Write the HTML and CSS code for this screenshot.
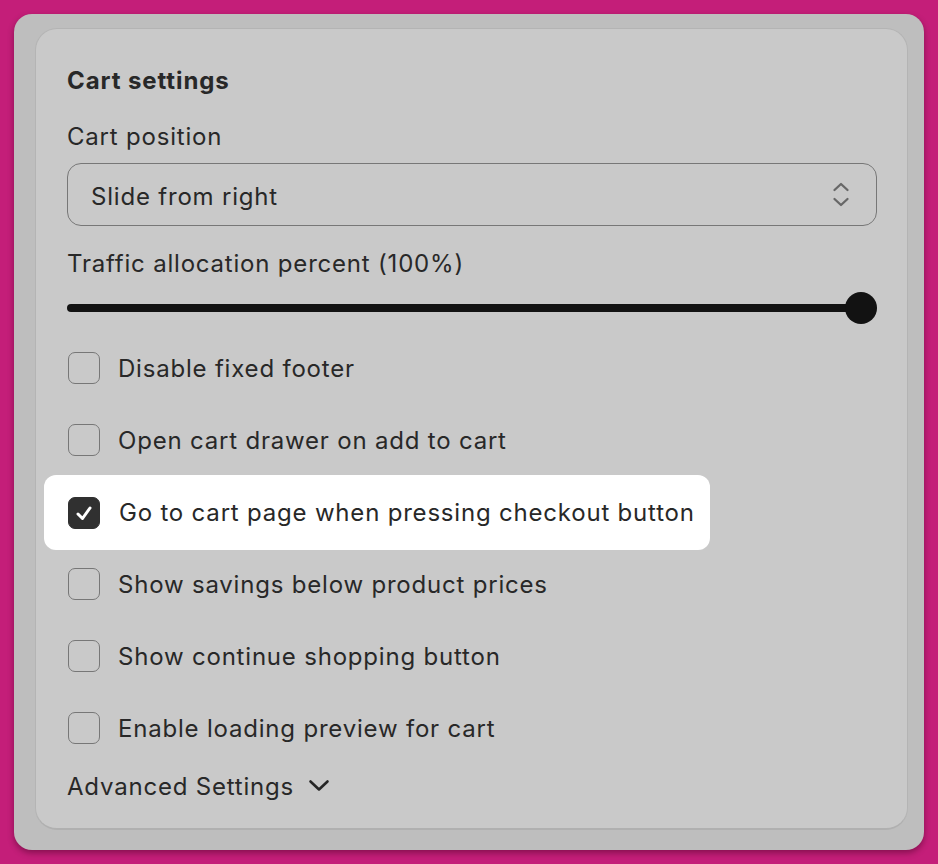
FILE: index.html
```html
<!DOCTYPE html>
<html lang="en">
    <head>
        <meta charset="UTF-8" />
        <meta name="viewport" content="width=device-width, initial-scale=1.0" />
        <title>Cart settings</title>
        <link rel="stylesheet" href="styles.css">
    </head>
    <body>
        <div class="frame">
            <div class="settings-card">
                <h2 class="card-title">Cart settings</h2>

                <div class="field-label">Cart position</div>
                <div class="select-box">
                    <span class="select-value">Slide from right</span>
                    <svg class="select-arrows" width="18" height="28" viewBox="0 0 18 28" fill="none" stroke="#676767" stroke-width="2.3" stroke-linecap="round" stroke-linejoin="round">
                        <path d="M2.5 9 L9 3 L15.5 9" />
                        <path d="M2.5 18 L9 24 L15.5 18" />
                    </svg>
                </div>

                <div class="field-label traffic-label">Traffic allocation percent (100%)</div>
                <div class="slider">
                    <div class="slider-track"></div>
                    <div class="slider-thumb"></div>
                </div>

                <div class="checkbox-list">
                    <div class="checkbox-row">
                        <span class="checkbox"></span>
                        <span class="checkbox-label">Disable fixed footer</span>
                    </div>
                    <div class="checkbox-row">
                        <span class="checkbox"></span>
                        <span class="checkbox-label">Open cart drawer on add to cart</span>
                    </div>
                    <div class="checkbox-row highlighted">
                        <span class="checkbox checked">
                            <svg width="22" height="22" viewBox="0 0 22 22" fill="none" stroke="#ffffff" stroke-width="3" stroke-linecap="round" stroke-linejoin="round">
                                <path d="M5 12 L9.5 16.5 L17 6" />
                            </svg>
                        </span>
                        <span class="checkbox-label">Go to cart page when pressing checkout button</span>
                    </div>
                    <div class="checkbox-row">
                        <span class="checkbox"></span>
                        <span class="checkbox-label">Show savings below product prices</span>
                    </div>
                    <div class="checkbox-row">
                        <span class="checkbox"></span>
                        <span class="checkbox-label">Show continue shopping button</span>
                    </div>
                    <div class="checkbox-row">
                        <span class="checkbox"></span>
                        <span class="checkbox-label">Enable loading preview for cart</span>
                    </div>
                </div>

                <div class="advanced-toggle">
                    <span>Advanced Settings</span>
                    <svg width="22" height="14" viewBox="0 0 22 14" fill="none" stroke="#262626" stroke-width="2.6" stroke-linecap="round" stroke-linejoin="round">
                        <path d="M2.5 2.5 L11 10.5 L19.5 2.5" />
                    </svg>
                </div>
            </div>
        </div>
    </body>
</html>
```

FILE: styles.css
```css
:root {
    --page-pink: #c41e79;
    --frame-color: #bebebe;
    --card-color: #c9c9c9;
    --text-color: #282828;
    --border-gray: #777777;
}

* {
    box-sizing: border-box;
}

body {
    margin: 0;
    padding: 14px;
    background-color: var(--page-pink);
    font-family: 'Inter', 'Noto Sans', sans-serif;
    color: var(--text-color);
    height: 864px;
}

.frame {
    background-color: var(--frame-color);
    border-radius: 18px;
    padding: 14px 16px 20px 21px;
    height: 836px;
    box-shadow: 0 3px 6px rgba(60, 0, 30, 0.45);
}

.settings-card {
    background-color: var(--card-color);
    border: 1px solid #b4b4b4;
    border-bottom: 2px solid #b0b0b0;
    border-radius: 22px;
    height: 802px;
    padding: 36px 30px 0 31px;
    display: flex;
    flex-direction: column;
    font-size: 24px;
    letter-spacing: 0.8px;
}

.card-title {
    margin: 0;
    font-size: 24px;
    font-weight: 700;
    line-height: 32px;
    letter-spacing: 0.9px;
}

.field-label {
    line-height: 32px;
    margin-top: 24px;
}

.select-box {
    margin-top: 10px;
    height: 63px;
    border: 1.3px solid var(--border-gray);
    border-radius: 14px;
    display: flex;
    align-items: center;
    justify-content: space-between;
    padding: 0 26px 0 23px;
}

.select-value {
    padding-top: 3px;
}

.select-arrows {
    display: block;
}

.traffic-label {
    margin-top: 22px;
}

.slider {
    margin-top: 12px;
    height: 32px;
    display: flex;
    align-items: center;
}

.slider-track {
    flex: 1;
    height: 8px;
    background-color: #121212;
    border-radius: 4px 0 0 4px;
}

.slider-thumb {
    width: 32px;
    height: 32px;
    border-radius: 50%;
    background-color: #121212;
    margin-left: -16px;
}

.checkbox-list {
    margin-top: 8px;
    display: flex;
    flex-direction: column;
}

.checkbox-row {
    height: 72px;
    display: flex;
    align-items: center;
    gap: 18px;
    padding-left: 1px;
}

.checkbox-row.highlighted {
    align-self: flex-start;
    background-color: #ffffff;
    border-radius: 12px;
    height: 75px;
    margin: -1px 0 -2px -23px;
    padding: 0 15px 0 24px;
    gap: 19px;
}

.checkbox {
    width: 32px;
    height: 32px;
    border: 1.4px solid var(--border-gray);
    border-radius: 7px;
    flex-shrink: 0;
    display: flex;
    align-items: center;
    justify-content: center;
}

.checkbox.checked {
    background-color: #303030;
    border-color: #303030;
}

.advanced-toggle {
    margin-top: 6px;
    height: 32px;
    display: flex;
    align-items: center;
    gap: 14px;
}

.advanced-toggle svg {
    display: block;
}
```
